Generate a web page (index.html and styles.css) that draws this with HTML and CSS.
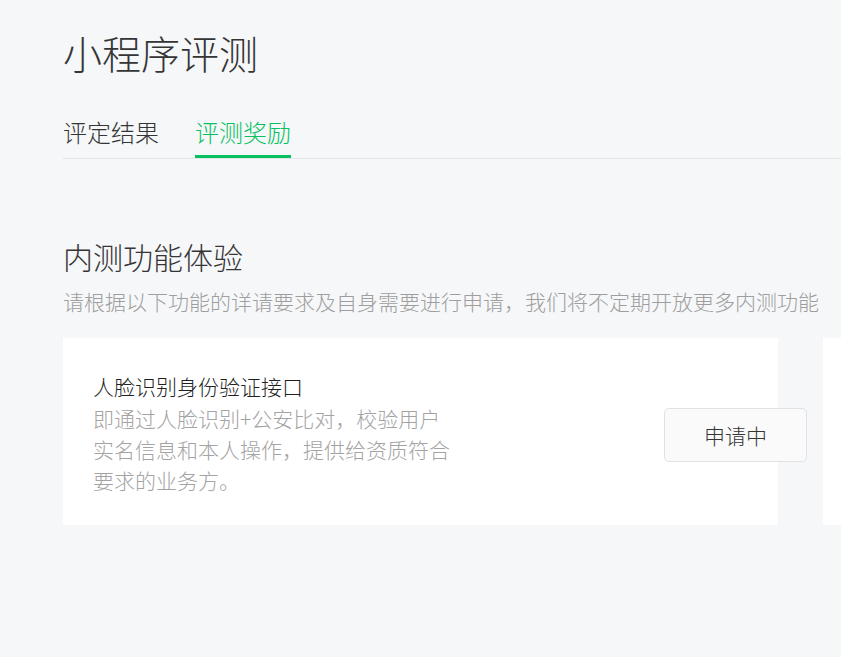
FILE: index.html
```html
<!DOCTYPE html>
<html lang="zh-CN">
<head>
<meta charset="utf-8">
<title>小程序评测</title>
<link rel="stylesheet" href="styles.css">
</head>
<body>
<div class="page">
  <h1 class="title">小程序评测</h1>
  <div class="tabs">
    <div class="tab">评定结果</div>
    <div class="tab active">评测奖励</div>
  </div>
  <section class="section">
    <h2 class="section-title">内测功能体验</h2>
    <p class="section-desc">请根据以下功能的详请要求及自身需要进行申请，我们将不定期开放更多内测功能</p>
    <div class="cards">
      <div class="card">
        <div class="card-info">
          <div class="card-title">人脸识别身份验证接口</div>
          <div class="card-desc">即通过人脸识别+公安比对，校验用户实名信息和本人操作，提供给资质符合要求的业务方。</div>
        </div>
        <button class="btn">申请中</button>
      </div>
      <div class="card"></div>
    </div>
  </section>
</div>
</body>
</html>
```

FILE: styles.css
```css
html, body {
  margin: 0;
  padding: 0;
  background: #f6f7f9;
  overflow: hidden;
}
body {
  font-family: "Noto Sans CJK SC", "Noto Sans", sans-serif;
  font-weight: 300;
  color: #353535;
}
.page {
  padding: 24px 0 0 63px;
  overflow: hidden;
}
.title {
  margin: 0;
  font-size: 39px;
  line-height: 56px;
  font-weight: 300;
  color: #353535;
}
.tabs {
  margin-top: 32px;
  display: flex;
  gap: 36px;
  border-bottom: 1px solid #e4e5e7;
}
.tab {
  font-size: 24px;
  line-height: 40px;
  padding-bottom: 3px;
  border-bottom: 3px solid transparent;
  color: #353535;
}
.tab.active {
  color: #07c160;
  border-bottom-color: #07c160;
}
.section {
  margin-top: 76px;
}
.section-title {
  margin: 0;
  font-size: 30px;
  line-height: 42px;
  font-weight: 300;
  color: #353535;
}
.section-desc {
  margin: 9px 0 0;
  font-size: 21px;
  line-height: 30px;
  color: #9e9e9e;
  white-space: nowrap;
}
.cards {
  margin-top: 22px;
  display: flex;
  gap: 45px;
  overflow: hidden;
}
.card {
  flex: 0 0 715px;
  height: 187px;
  box-sizing: border-box;
  background: #fff;
  padding: 33px 30px 0;
  display: flex;
  align-items: flex-start;
}
.card-info {
  width: 360px;
}
.card-title {
  font-size: 21px;
  line-height: 31px;
  color: #1f1f1f;
}
.card-desc {
  margin-top: 1px;
  font-size: 21px;
  line-height: 31px;
  color: #a3a3a3;
}
.btn {
  margin: 37px -59px 0 auto;
  width: 143px;
  height: 54px;
  box-sizing: border-box;
  border: 1px solid #e2e2e2;
  border-radius: 5px;
  background: #fafafa;
  font-family: inherit;
  font-weight: 300;
  font-size: 21px;
  color: #353535;
  padding: 0;
  flex-shrink: 0;
}
```
